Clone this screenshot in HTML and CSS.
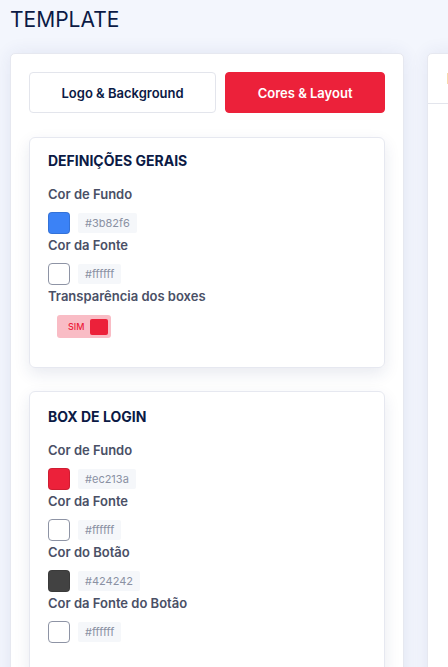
FILE: index.html
```html
<!DOCTYPE html>
<html>
<head>
  <meta charset="UTF-8" />
  <title>Template</title>
  <link rel="stylesheet" href="styles.css">
</head>
<body>
  <h1 class="page-title">TEMPLATE</h1>
  <div class="layout">
    <div class="panel settings-panel">
      <div class="tabs">
        <button class="tab">Logo &amp; Background</button>
        <button class="tab active">Cores &amp; Layout</button>
      </div>

      <div class="card">
        <h2 class="card-title">DEFINIÇÕES GERAIS</h2>
        <div class="field">
          <label>Cor de Fundo</label>
          <div class="color-row">
            <span class="swatch" style="background:#3b82f6"></span>
            <span class="hex">#3b82f6</span>
          </div>
        </div>
        <div class="field">
          <label>Cor da Fonte</label>
          <div class="color-row">
            <span class="swatch light"></span>
            <span class="hex">#ffffff</span>
          </div>
        </div>
        <div class="field">
          <label>Transparência dos boxes</label>
          <div class="toggle">
            <span class="toggle-text">SIM</span>
            <span class="toggle-knob"></span>
          </div>
        </div>
      </div>

      <div class="card">
        <h2 class="card-title">BOX DE LOGIN</h2>
        <div class="field">
          <label>Cor de Fundo</label>
          <div class="color-row">
            <span class="swatch" style="background:#ec213a"></span>
            <span class="hex">#ec213a</span>
          </div>
        </div>
        <div class="field">
          <label>Cor da Fonte</label>
          <div class="color-row">
            <span class="swatch light"></span>
            <span class="hex">#ffffff</span>
          </div>
        </div>
        <div class="field">
          <label>Cor do Botão</label>
          <div class="color-row">
            <span class="swatch" style="background:#424242"></span>
            <span class="hex">#424242</span>
          </div>
        </div>
        <div class="field">
          <label>Cor da Fonte do Botão</label>
          <div class="color-row">
            <span class="swatch light"></span>
            <span class="hex">#ffffff</span>
          </div>
        </div>
      </div>
    </div>

    <div class="panel preview-panel">
      <div class="preview-header">PRÉ-VISUALIZAÇÃO</div>
    </div>
  </div>
</body>
</html>
```

FILE: styles.css
```css
html, body {
  overflow: hidden;
}
body {
  font-family: Inter, "Noto Sans", sans-serif;
  margin: 0;
  padding: 7px 10px 0;
  background: #f3f6fd;
  color: #0b1a45;
}
.page-title {
  margin: 0 0 21px;
  font-size: 21px;
  font-weight: 400;
  line-height: 25px;
  color: #0b1a45;
}
.layout {
  display: flex;
  gap: 23px;
  align-items: flex-start;
}
.panel {
  background: #fff;
  border: 1px solid #e6e8f0;
  border-radius: 5px;
  box-shadow: 0 0 18px rgba(40, 55, 130, 0.09);
}
.settings-panel {
  flex: 0 0 394px;
  box-sizing: border-box;
  padding: 18px 18px 30px;
}
.preview-panel {
  flex: 0 0 400px;
  min-height: 700px;
}
.preview-header {
  height: 49px;
  border-bottom: 1px solid #e3e5ec;
  padding: 0 19px;
  font-size: 14px;
  font-weight: 700;
  line-height: 49px;
  white-space: nowrap;
}
.tabs {
  display: flex;
  gap: 9px;
  margin-bottom: 24px;
}
.tab {
  flex: 1 1 auto;
  height: 41px;
  padding: 0;
  border: 1px solid #e3e5ec;
  border-radius: 4px;
  background: #fff;
  color: #0b1a45;
  font-family: inherit;
  font-size: 13px;
  font-weight: 600;
  cursor: pointer;
}
.tab.active {
  background: #ec213a;
  border-color: #ec213a;
  color: #fff;
}
.card {
  border: 1px solid #e6e8f0;
  border-radius: 6px;
  padding: 14px 18px 29px;
  margin-bottom: 23px;
  box-shadow: 0 6px 16px rgba(30, 45, 110, 0.10);
}
.card + .card {
  padding-top: 16px;
}
.card-title {
  margin: 0;
  font-size: 14px;
  font-weight: 700;
  line-height: 17px;
  color: #0b1a45;
}
.field {
  margin-top: 3px;
}
.card-title + .field {
  margin-top: 17px;
}
.field label {
  display: block;
  margin-bottom: 10px;
  font-size: 13px;
  font-weight: 600;
  line-height: 16px;
  color: #4a5066;
}
.color-row {
  display: flex;
  align-items: center;
  gap: 8px;
}
.swatch {
  width: 20px;
  height: 20px;
  border: 1px solid rgba(0, 0, 0, 0.12);
  border-radius: 4px;
}
.swatch.light {
  background: #fff;
  border-color: #8e94a5;
}
.hex {
  height: 20px;
  padding: 0 7px;
  background: #f5f7fa;
  border-radius: 2px;
  font-size: 11px;
  line-height: 20px;
  color: #8a91a3;
}
.toggle {
  display: inline-flex;
  align-items: center;
  box-sizing: border-box;
  width: 54px;
  height: 23px;
  margin-left: 9px;
  padding: 0 3px 0 11px;
  background: #f9bcc5;
  border-radius: 3px;
}
.toggle-text {
  font-size: 9px;
  font-weight: 500;
  color: #ec213a;
}
.toggle-knob {
  margin-left: auto;
  width: 18px;
  height: 16px;
  background: #ec213a;
  border-radius: 2px;
}
```
